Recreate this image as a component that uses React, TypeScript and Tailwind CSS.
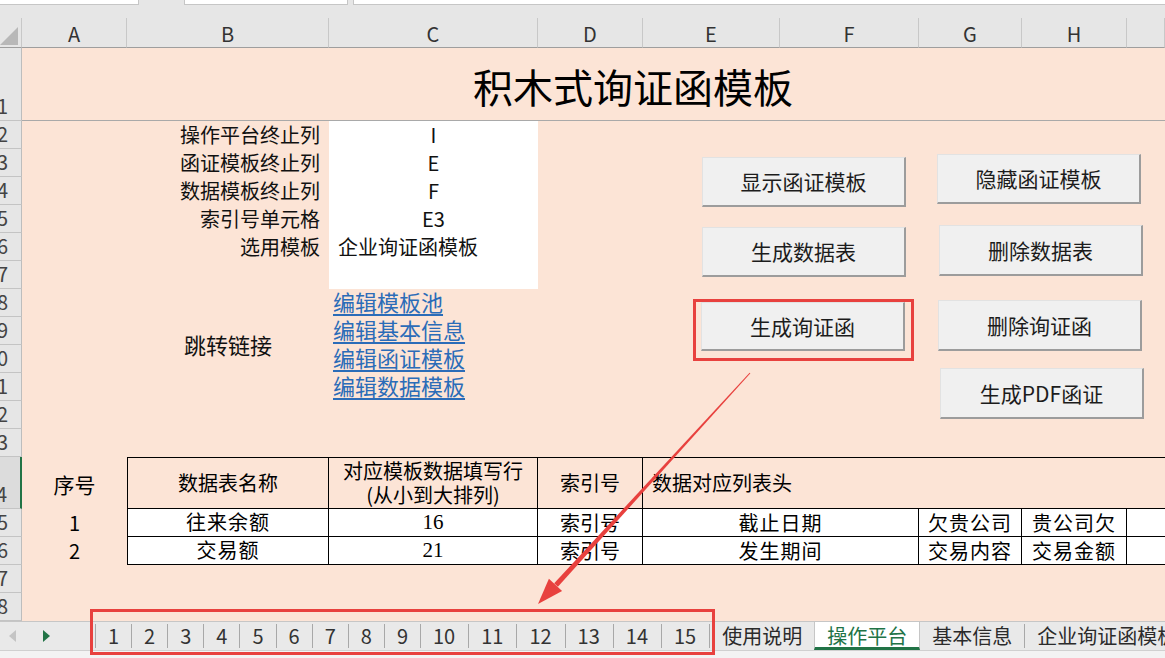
import React from 'react';

const rows = [
  { n: 1, h: 'h-[73px]' },
  { n: 2, h: 'h-[28px]' },
  { n: 3, h: 'h-[28px]' },
  { n: 4, h: 'h-[28px]' },
  { n: 5, h: 'h-[28px]' },
  { n: 6, h: 'h-[28px]' },
  { n: 7, h: 'h-[28px]' },
  { n: 8, h: 'h-[28px]' },
  { n: 9, h: 'h-[28px]' },
  { n: 10, h: 'h-[28px]' },
  { n: 11, h: 'h-[28px]' },
  { n: 12, h: 'h-[28px]' },
  { n: 13, h: 'h-[28px]' },
  { n: 14, h: 'h-[52px]' },
  { n: 15, h: 'h-[28px]' },
  { n: 16, h: 'h-[28px]' },
  { n: 17, h: 'h-[28px]' },
  { n: 18, h: 'h-[28px]' },
];

const cols = ['A', 'B', 'C', 'D', 'E', 'F', 'G', 'H', ''];

const settings = [
  { row: 'row-[3]', label: '操作平台终止列', value: 'I' },
  { row: 'row-[4]', label: '函证模板终止列', value: 'E' },
  { row: 'row-[5]', label: '数据模板终止列', value: 'F' },
  { row: 'row-[6]', label: '索引号单元格', value: 'E3' },
];

const links = [
  { row: 'row-[9]', text: '编辑模板池' },
  { row: 'row-[10]', text: '编辑基本信息' },
  { row: 'row-[11]', text: '编辑函证模板' },
  { row: 'row-[12]', text: '编辑数据模板' },
];

const dataRows = [
  { row: 'row-[16]', no: '1', name: '往来余额', line: '16', a: '截止日期', b: '欠贵公司', c: '贵公司欠' },
  { row: 'row-[17]', no: '2', name: '交易额', line: '21', a: '发生期间', b: '交易内容', c: '交易金额' },
];

const buttons = [
  { pos: 'left-[702px] top-[157px] h-[50px]', text: '显示函证模板' },
  { pos: 'left-[937px] top-[154px] h-[50px]', text: '隐藏函证模板' },
  { pos: 'left-[702px] top-[227px] h-[50px]', text: '生成数据表' },
  { pos: 'left-[939px] top-[225px] h-[51px]', text: '删除数据表' },
  { pos: 'left-[701px] top-[302px] h-[49px]', text: '生成询证函' },
  { pos: 'left-[938px] top-[300px] h-[51px]', text: '删除询证函' },
  { pos: 'left-[940px] top-[368px] h-[51px]', text: '生成PDF函证' },
];

const numberTabs = ['1', '2', '3', '4', '5', '6', '7', '8', '9', '10', '11', '12', '13', '14', '15'];

function Sep() {
  return <span className="h-[24px] w-px shrink-0 self-center bg-[#a8a8a8]" />;
}

function TabBar() {
  return (
    <div className="flex h-[29px] items-stretch overflow-hidden whitespace-nowrap border-t border-[#c6c6c6] bg-[#e9e9e9] text-[20px] leading-none text-[#2b2b2b]">
      <div className="flex w-[95px] shrink-0 items-center">
        <svg width="8" height="12" viewBox="0 0 8 12" className="ml-[9px]">
          <polygon points="7,0 7,12 0,6" fill="#c4c4c4" />
        </svg>
        <svg width="7" height="12" viewBox="0 0 7 12" className="ml-[26px]">
          <polygon points="0,0 0,12 7,6" fill="#217346" />
        </svg>
      </div>
      {numberTabs.map((t) => (
        <div key={t} className="flex shrink-0 items-stretch text-[#333]">
          <Sep />
          <span className={t.length > 1 ? 'flex items-center pl-[12px] pr-[13px]' : 'flex items-center px-[12px]'}>{t}</span>
        </div>
      ))}
      <Sep />
      <span className="flex shrink-0 items-center px-[12px]">使用说明</span>
      <span className="flex shrink-0 items-center border-x border-x-[#c6c6c6] border-b-[3px] border-b-[#217346] bg-white px-[12px] pt-[2px] text-[#217346]">
        操作平台
      </span>
      <span className="flex shrink-0 items-center px-[12px]">基本信息</span>
      <Sep />
      <span className="flex shrink-0 items-center px-[12px]">企业询证函模板</span>
    </div>
  );
}

export default function App() {
  return (
    <div className="relative h-[658px] w-[1165px] overflow-hidden bg-[#e6e6e6] font-['Noto_Sans_CJK_SC','Noto_Sans',sans-serif] text-black">
      {/* bottom edge of the formula bar */}
      <div className="flex h-[18px]">
        <div className="h-[5px] w-[139px] border-b border-r border-[#c6c6c6] bg-white" />
        <div className="w-[45px]" />
        <div className="h-[5px] w-[164px] border-x border-b border-[#c6c6c6] bg-white" />
        <div className="w-[5px]" />
        <div className="h-[5px] flex-1 border-b border-l border-[#c6c6c6] bg-white" />
      </div>

      <div className="flex">
        {/* row headers */}
        <div className="flex w-[22px] shrink-0 flex-col">
          <div className="relative h-[30px] border-b border-r border-b-[#9e9e9e] border-r-[#c8c8c8]">
            <svg width="19" height="19" viewBox="0 0 19 19" className="absolute left-0 top-[9px]">
              <polygon points="18,0 18,18 0,18" fill="#b8b8b8" />
            </svg>
          </div>
          {rows.map((r) => (
            <div
              key={r.n}
              className={`${r.h} flex items-end justify-end overflow-hidden border-b border-b-[#c4c4c4] pb-[1px] pr-[13px] text-[20px] leading-[26px] text-[#444] ${
                r.n === 14 ? 'border-r-2 border-r-[#217346] bg-[#dcdcdc]' : 'border-r border-r-[#bdbdbd] bg-[#e6e6e6]'
              }`}
            >
              {r.n}
            </div>
          ))}
        </div>

        {/* sheet */}
        <div className="grid flex-1 grid-cols-[105px_202px_209px_105px_137px_139px_103px_105px_1fr] grid-rows-[30px_73px_repeat(12,28px)_52px_repeat(4,28px)]">
          {cols.map((c, i) => (
            <div
              key={i}
              className="row-[1] flex items-center justify-center border-b border-r border-b-[#9e9e9e] border-r-[#c8c8c8] pt-[3px] text-[20px] text-[#333]"
            >
              {c}
            </div>
          ))}

          <div className="col-[1/-1] row-[2/-1] bg-[#fce4d6]" />

          <div className="col-[1/-1] row-[2] flex items-center border-b border-[#a9a9a9] pl-[451px] pt-[3px] text-[40px] leading-none">
            积木式询证函模板
          </div>

          <div className="col-[3] row-[3/9] bg-white" />

          {settings.map((s) => (
            <React.Fragment key={s.label}>
              <div className={`col-[2] ${s.row} flex items-center justify-end pr-[9px] text-[20px] leading-none text-[#111]`}>
                {s.label}
              </div>
              <div className={`col-[3] ${s.row} flex items-center justify-center text-[20px] leading-none text-[#111]`}>
                {s.value}
              </div>
            </React.Fragment>
          ))}
          <div className="col-[2] row-[7] flex items-center justify-end pr-[9px] text-[20px] leading-none text-[#111]">选用模板</div>
          <div className="col-[3] row-[7] flex items-center pl-[9px] text-[20px] leading-none text-[#111]">企业询证函模板</div>

          <div className="col-[2] row-[9/13] flex items-center justify-center pb-[3px] text-[22px] leading-none text-[#111]">跳转链接</div>
          {links.map((l) => (
            <div
              key={l.text}
              className={`col-[3] ${l.row} flex items-center pb-[4px] pl-[4px] text-[22px] leading-none text-[#2b6cb8] underline underline-offset-[3px]`}
            >
              {l.text}
            </div>
          ))}

          {/* table header */}
          <div className="col-[1] row-[15] flex items-center justify-center pt-[2px] text-[21px] leading-none">序号</div>
          <div className="col-[2] row-[15] flex items-center justify-center border border-black text-[20px] leading-none">数据表名称</div>
          <div className="col-[3] row-[15] flex flex-col items-center justify-center border-y border-r border-black text-[20px] leading-[24px]">
            <span>对应模板数据填写行</span>
            <span>(从小到大排列)</span>
          </div>
          <div className="col-[4] row-[15] flex items-center justify-center border-y border-r border-black text-[20px] leading-none">索引号</div>
          <div className="col-[5/-1] row-[15] flex items-center border-y border-black pl-[9px] text-[20px] leading-none">数据对应列表头</div>

          {/* table data */}
          {dataRows.map((d) => (
            <React.Fragment key={d.no}>
              <div className={`col-[1] ${d.row} flex items-center justify-center text-[20px] leading-none`}>{d.no}</div>
              <div className={`col-[2] ${d.row} flex items-center justify-center border-x border-b border-black bg-white font-['Liberation_Serif','Noto_Sans_CJK_SC',serif] text-[20px] leading-none tracking-[1px]`}>
                {d.name}
              </div>
              <div className={`col-[3] ${d.row} flex items-center justify-center border-b border-r border-black bg-white font-['Liberation_Serif','Noto_Sans_CJK_SC',serif] text-[21px] leading-none`}>
                {d.line}
              </div>
              <div className={`col-[4] ${d.row} flex items-center justify-center border-b border-r border-black bg-white text-[20px] leading-none`}>
                索引号
              </div>
              <div className={`col-[5/7] ${d.row} flex items-center justify-center border-b border-r border-black bg-white text-[20px] leading-none tracking-[1px]`}>
                {d.a}
              </div>
              <div className={`col-[7] ${d.row} flex items-center justify-center border-b border-r border-black bg-white text-[20px] leading-none tracking-[1px]`}>
                {d.b}
              </div>
              <div className={`col-[8] ${d.row} flex items-center justify-center border-b border-r border-black bg-white text-[20px] leading-none tracking-[1px]`}>
                {d.c}
              </div>
              <div className={`col-[9] ${d.row} border-b border-black bg-white`} />
            </React.Fragment>
          ))}
        </div>
      </div>

      <TabBar />
      <div className="h-[8px] border-t border-[#d0d0d0] bg-[#f3f3f3]" />

      {/* form buttons floating over the sheet */}
      {buttons.map((b) => (
        <div
          key={b.text}
          className={`absolute ${b.pos} flex w-[204px] items-center justify-center border-b-2 border-l border-r-2 border-t border-b-[#9c9c9c] border-l-[#e2e2e2] border-r-[#9c9c9c] border-t-[#e2e2e2] bg-[#f0f0f0] text-[21px] leading-none text-[#1c1c1c]`}
        >
          {b.text}
        </div>
      ))}

      {/* red annotations */}
      <svg className="pointer-events-none absolute left-0 top-0" width="1165" height="658" viewBox="0 0 1165 658">
        <rect x="694.5" y="300.5" width="218" height="59" fill="none" stroke="#e8413e" strokeWidth="3" />
        <rect x="91.5" y="610.5" width="622" height="43" fill="none" stroke="#e8413e" strokeWidth="3" />
        <polygon points="750.4,373.3 749.6,372.7 554.2,583.3 557.9,586.7" fill="#e8413e" />
        <polygon points="538,604 562.1,590.9 548.9,578.7" fill="#e8413e" />
      </svg>
    </div>
  );
}
